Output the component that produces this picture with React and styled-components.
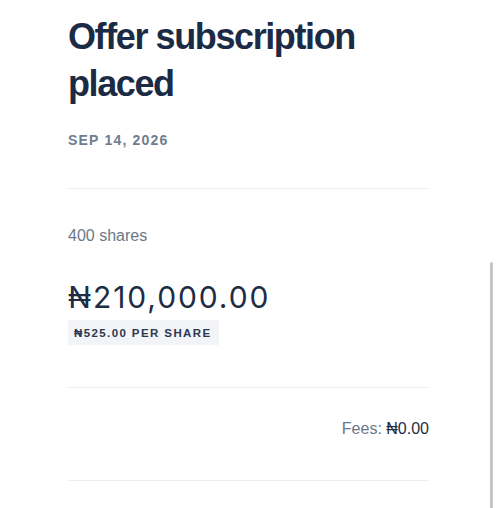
import React from 'react';
import styled, { createGlobalStyle } from 'styled-components';

const GlobalStyle = createGlobalStyle`
	html, body {
		margin: 0;
		padding: 0;
		background: #ffffff;
		font-family: "Liberation Sans", Arial, sans-serif;
		overflow: hidden;
	}
`;

const Page = styled.div`
	position: relative;
	width: 497px;
	height: 508px;
	overflow: hidden;
`;

const Content = styled.div`
	width: 361px;
	padding: 13px 0 0 68px;
	display: flex;
	flex-direction: column;
`;

const Title = styled.h1`
	margin: 0;
	font-size: 36px;
	line-height: 47px;
	font-weight: 700;
	letter-spacing: -1.4px;
	color: #1c2b45;
`;

const DateLine = styled.div`
	margin-top: 25px;
	font-size: 14px;
	line-height: 16px;
	font-weight: 700;
	letter-spacing: 1.2px;
	color: #6e7d91;
`;

const Divider = styled.hr`
	margin: ${p => p.$top}px 0 0;
	border: none;
	border-top: 1px solid #eceef1;
	height: 0;
`;

const Shares = styled.div`
	margin-top: 37px;
	font-size: 16px;
	line-height: 20px;
	color: #6b7889;
`;

const Amount = styled.div`
	margin-top: 33px;
	font-family: Inter, "Liberation Sans", sans-serif;
	font-size: 30px;
	line-height: 36px;
	letter-spacing: 1.9px;
	color: #1e2d44;
`;

const Badge = styled.div`
	align-self: flex-start;
	margin-top: 5px;
	padding: 0 7px 0 6px;
	height: 25px;
	display: flex;
	align-items: center;
	background: #f2f4f7;
	font-size: 11.5px;
	font-weight: 700;
	letter-spacing: 1.4px;
	color: #2a3850;
`;

const Fees = styled.div`
	margin-top: 31px;
	text-align: right;
	font-size: 16px;
	line-height: 20px;
	color: #6b7889;

	& > span {
		color: #1e2d44;
	}
`;

const ScrollThumb = styled.div`
	position: absolute;
	left: 490px;
	top: 262px;
	width: 3px;
	height: 260px;
	border-radius: 2px;
	background: #c6c6c6;
`;

export default function App() {
	return (
		<Page>
			<GlobalStyle />
			<Content>
				<Title>Offer subscription placed</Title>
				<DateLine>SEP 14, 2026</DateLine>
				<Divider $top={40} />
				<Shares>400 shares</Shares>
				<Amount>₦210,000.00</Amount>
				<Badge>₦525.00 PER SHARE</Badge>
				<Divider $top={42} />
				<Fees>Fees: <span>₦0.00</span></Fees>
				<Divider $top={41} />
			</Content>
			<ScrollThumb />
		</Page>
	);
}
